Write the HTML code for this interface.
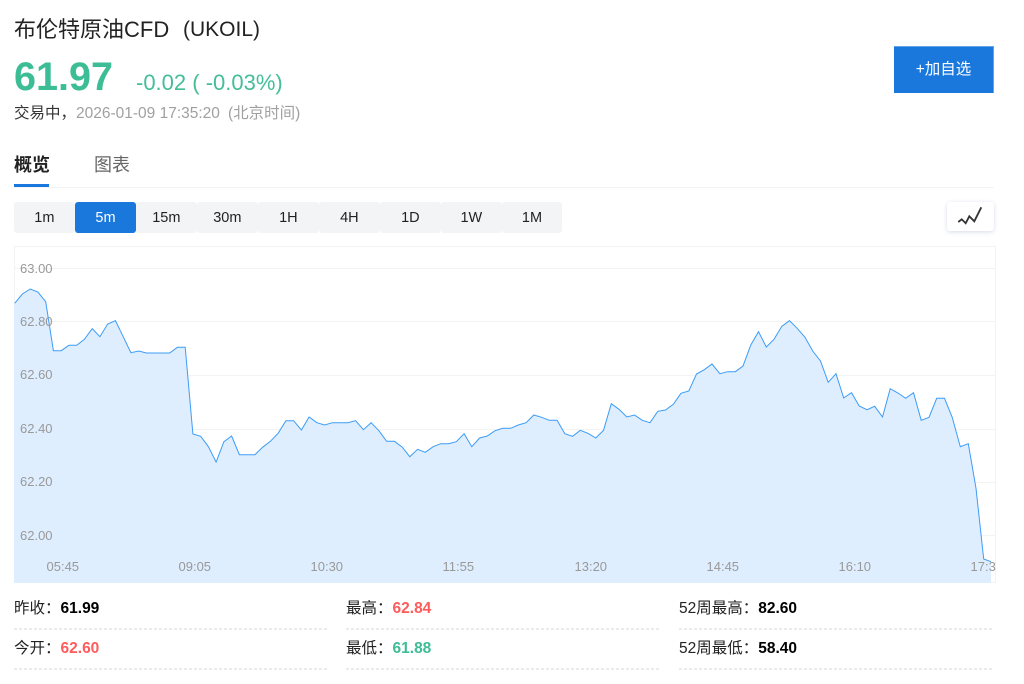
<!DOCTYPE html>
<html lang="zh-CN">
<head>
<meta charset="utf-8">
<title>布伦特原油CFD (UKOIL)</title>
<style>
html,body{margin:0;padding:0;background:#fff;width:1024px;height:684px;overflow:hidden}
body{position:relative;font-family:"Liberation Sans","Noto Sans CJK SC",sans-serif;color:#222}
.a{position:absolute;white-space:nowrap}
.btn{position:absolute;top:202px;height:31px;line-height:32px;width:60.7px;text-align:center;font-size:14.5px;background:#f3f4f6;border-radius:3px;color:#222}
.btn.on{background:#1a78dc;color:#fff;width:61px}
.row{position:absolute;height:20px;line-height:20px;font-size:15.5px;white-space:nowrap;color:#222}
.dash{position:absolute;height:2px;background:repeating-linear-gradient(90deg,#ebebeb 0,#ebebeb 3px,#fff 3px,#fff 5px)}
.r{color:#ff5b5b}.g{color:#3dbd95}.k{color:#000}
</style>
</head>
<body>
<div class="a" style="left:14px;top:16px;font-size:22px;line-height:28px;color:#222">布伦特原油CFD</div>
<div class="a" style="left:183px;top:16px;font-size:21px;line-height:28px;color:#222">(UKOIL)</div>
<div class="a" style="left:14px;top:54px;font-size:39.6px;line-height:46px;font-weight:bold;color:#3dbd95">61.97</div>
<div class="a" style="left:136px;top:69px;font-size:22px;line-height:28px;color:#44bd98">-0.02 ( -0.03%)</div>
<div class="a" style="left:14px;top:104px;font-size:15.5px;line-height:20px;color:#333">交易中，</div>
<div class="a" style="left:76px;top:104px;font-size:15.5px;line-height:20px;color:#a0a0a0">2026-01-09 17:35:20</div>
<div class="a" style="left:228px;top:104px;font-size:15.5px;line-height:20px;color:#a0a0a0">(北京时间)</div>

<div class="a" style="left:894px;top:46px;width:100px;height:47px;background:#1a78dc;color:#fff;font-size:15.5px;line-height:46px;text-align:center;border-top:1px solid #62a5ea;border-right:1px solid #62a5ea;box-sizing:border-box">+加自选</div>

<div class="a" style="left:14px;top:153px;font-size:18px;line-height:24px;font-weight:bold;color:#222">概览</div>
<div class="a" style="left:94px;top:153px;font-size:18px;line-height:24px;color:#666">图表</div>
<div class="a" style="left:14px;top:187px;width:980px;height:1px;background:#f4f4f4"></div>
<div class="a" style="left:14px;top:184px;width:35px;height:3px;background:#1a78dc"></div>

<div class="btn" style="left:14px">1m</div>
<div class="btn on" style="left:75px">5m</div>
<div class="btn" style="left:136px">15m</div>
<div class="btn" style="left:197px">30m</div>
<div class="btn" style="left:258px">1H</div>
<div class="btn" style="left:319px">4H</div>
<div class="btn" style="left:380px">1D</div>
<div class="btn" style="left:441px">1W</div>
<div class="btn" style="left:502px;width:60px">1M</div>

<div class="a" style="left:947px;top:202px;width:47px;height:29px;background:#fff;border-radius:3px;box-shadow:0 1px 4px rgba(60,90,140,.22)"></div>
<svg class="a" style="left:947px;top:202px" width="47" height="29" viewBox="947 202 47 29"><polyline points="958.3,222 961.7,219.3 965.7,223.3 969.3,216.3 974.3,221.3 981.3,207.3" fill="none" stroke="#333" stroke-width="1.8"/></svg>

<svg class="a" style="left:14px;top:246px" width="982" height="337" viewBox="14 246 982 337">
<rect x="14.5" y="246.5" width="981" height="336" fill="#fff" stroke="#f2f2f2"/>
<g stroke="#f3f3f3" stroke-width="1">
<line x1="15" x2="995" y1="268.5" y2="268.5"/>
<line x1="15" x2="995" y1="321.5" y2="321.5"/>
<line x1="15" x2="995" y1="375.5" y2="375.5"/>
<line x1="15" x2="995" y1="429.5" y2="429.5"/>
<line x1="15" x2="995" y1="482.5" y2="482.5"/>
<line x1="15" x2="995" y1="535.5" y2="535.5"/>
</g>
<path fill="#deeeff" d="M14 303.3 L14.7 303.3 22.4 294 30.2 289 37.9 292 45.7 301.7 53.4 350.7 61.2 350.7 68.9 345.3 76.7 345.3 84.4 339.3 92.2 328.7 99.9 336.7 107.7 324 115.4 320.7 123.2 336.7 130.9 352.7 138.7 351 146.4 353 154.2 353 161.9 353 169.7 353 177.4 347.3 185.2 347.3 192.9 434 200.7 436.3 208.4 446.7 216.1 462 223.9 441.7 231.6 436 239.4 454.7 247.1 454.7 254.9 454.7 262.6 447.3 270.4 441.3 278.1 433.3 285.9 420.7 293.6 420.7 301.4 430 309.1 417 316.9 422.7 324.6 425 332.4 422.7 340.1 422.7 347.9 422.7 355.6 420.7 363.4 429.7 371.1 422.7 378.9 430.7 386.6 441.3 394.4 441.3 402.1 447 409.8 456.7 417.6 449.3 425.3 452.3 433.1 446.7 440.8 443.7 448.6 443.7 456.3 441.7 464.1 433.7 471.8 446.7 479.6 438 487.3 436 495.1 430.7 502.8 428.3 510.6 428.3 518.3 425 526.1 422.7 533.8 415 541.6 417.3 549.3 420.3 557.1 420.3 564.8 433.7 572.6 436.3 580.3 430.3 588 433.3 595.8 438 603.5 430.3 611.3 403.7 619 409.3 626.8 417 634.5 415 642.3 420.3 650 422.7 657.8 411.3 665.5 410 673.3 404.3 681 393.3 688.8 391 696.5 374 704.3 369.7 712 364 719.8 373.7 727.5 371.7 735.3 371.7 743 366 750.8 345 758.5 331.7 766.3 347 774 339.3 781.8 326.3 789.5 320.7 797.2 328.3 805 337.3 812.7 351 820.5 361 828.2 382.3 836 373.7 843.7 398 851.5 392.7 859.2 406 867 409.7 874.7 406.3 882.5 417 890.2 388.7 898 393 905.7 398.3 913.5 392.7 921.2 420.3 929 417.3 936.7 398.3 944.5 398.3 952.2 417.3 960.3 446.7 968.3 443.7 976 488.3 983.7 559 991 561.7 L991 583 L14 583 Z"/>
<polyline fill="none" stroke="#3d9cf5" stroke-width="1" points="14.7,303.3 22.4,294 30.2,289 37.9,292 45.7,301.7 53.4,350.7 61.2,350.7 68.9,345.3 76.7,345.3 84.4,339.3 92.2,328.7 99.9,336.7 107.7,324 115.4,320.7 123.2,336.7 130.9,352.7 138.7,351 146.4,353 154.2,353 161.9,353 169.7,353 177.4,347.3 185.2,347.3 192.9,434 200.7,436.3 208.4,446.7 216.1,462 223.9,441.7 231.6,436 239.4,454.7 247.1,454.7 254.9,454.7 262.6,447.3 270.4,441.3 278.1,433.3 285.9,420.7 293.6,420.7 301.4,430 309.1,417 316.9,422.7 324.6,425 332.4,422.7 340.1,422.7 347.9,422.7 355.6,420.7 363.4,429.7 371.1,422.7 378.9,430.7 386.6,441.3 394.4,441.3 402.1,447 409.8,456.7 417.6,449.3 425.3,452.3 433.1,446.7 440.8,443.7 448.6,443.7 456.3,441.7 464.1,433.7 471.8,446.7 479.6,438 487.3,436 495.1,430.7 502.8,428.3 510.6,428.3 518.3,425 526.1,422.7 533.8,415 541.6,417.3 549.3,420.3 557.1,420.3 564.8,433.7 572.6,436.3 580.3,430.3 588,433.3 595.8,438 603.5,430.3 611.3,403.7 619,409.3 626.8,417 634.5,415 642.3,420.3 650,422.7 657.8,411.3 665.5,410 673.3,404.3 681,393.3 688.8,391 696.5,374 704.3,369.7 712,364 719.8,373.7 727.5,371.7 735.3,371.7 743,366 750.8,345 758.5,331.7 766.3,347 774,339.3 781.8,326.3 789.5,320.7 797.2,328.3 805,337.3 812.7,351 820.5,361 828.2,382.3 836,373.7 843.7,398 851.5,392.7 859.2,406 867,409.7 874.7,406.3 882.5,417 890.2,388.7 898,393 905.7,398.3 913.5,392.7 921.2,420.3 929,417.3 936.7,398.3 944.5,398.3 952.2,417.3 960.3,446.7 968.3,443.7 976,488.3 983.7,559 991,561.7"/>
<g font-family="Liberation Sans" font-size="13" fill="#999">
<text x="20" y="273">63.00</text>
<text x="20" y="326">62.80</text>
<text x="20" y="379">62.60</text>
<text x="20" y="433">62.40</text>
<text x="20" y="486">62.20</text>
<text x="20" y="540">62.00</text>
<text x="46.5" y="571">05:45</text>
<text x="178.5" y="571">09:05</text>
<text x="310.5" y="571">10:30</text>
<text x="442.5" y="571">11:55</text>
<text x="574.5" y="571">13:20</text>
<text x="706.5" y="571">14:45</text>
<text x="838.5" y="571">16:10</text>
<text x="970.5" y="571">17:3</text>
</g>
</svg>

<div class="row" style="left:14px;top:599px">昨收：<b class="k">61.99</b></div>
<div class="row" style="left:346px;top:599px">最高：<b class="r">62.84</b></div>
<div class="row" style="left:679px;top:599px">52周最高：<b class="k">82.60</b></div>
<div class="row" style="left:14px;top:639px">今开：<b class="r">62.60</b></div>
<div class="row" style="left:346px;top:639px">最低：<b class="g">61.88</b></div>
<div class="row" style="left:679px;top:639px">52周最低：<b class="k">58.40</b></div>
<div class="dash" style="left:14px;top:628px;width:314px"></div>
<div class="dash" style="left:346px;top:628px;width:315px"></div>
<div class="dash" style="left:679px;top:628px;width:315px"></div>
<div class="dash" style="left:14px;top:668px;width:314px"></div>
<div class="dash" style="left:346px;top:668px;width:315px"></div>
<div class="dash" style="left:679px;top:668px;width:315px"></div>
</body>
</html>
